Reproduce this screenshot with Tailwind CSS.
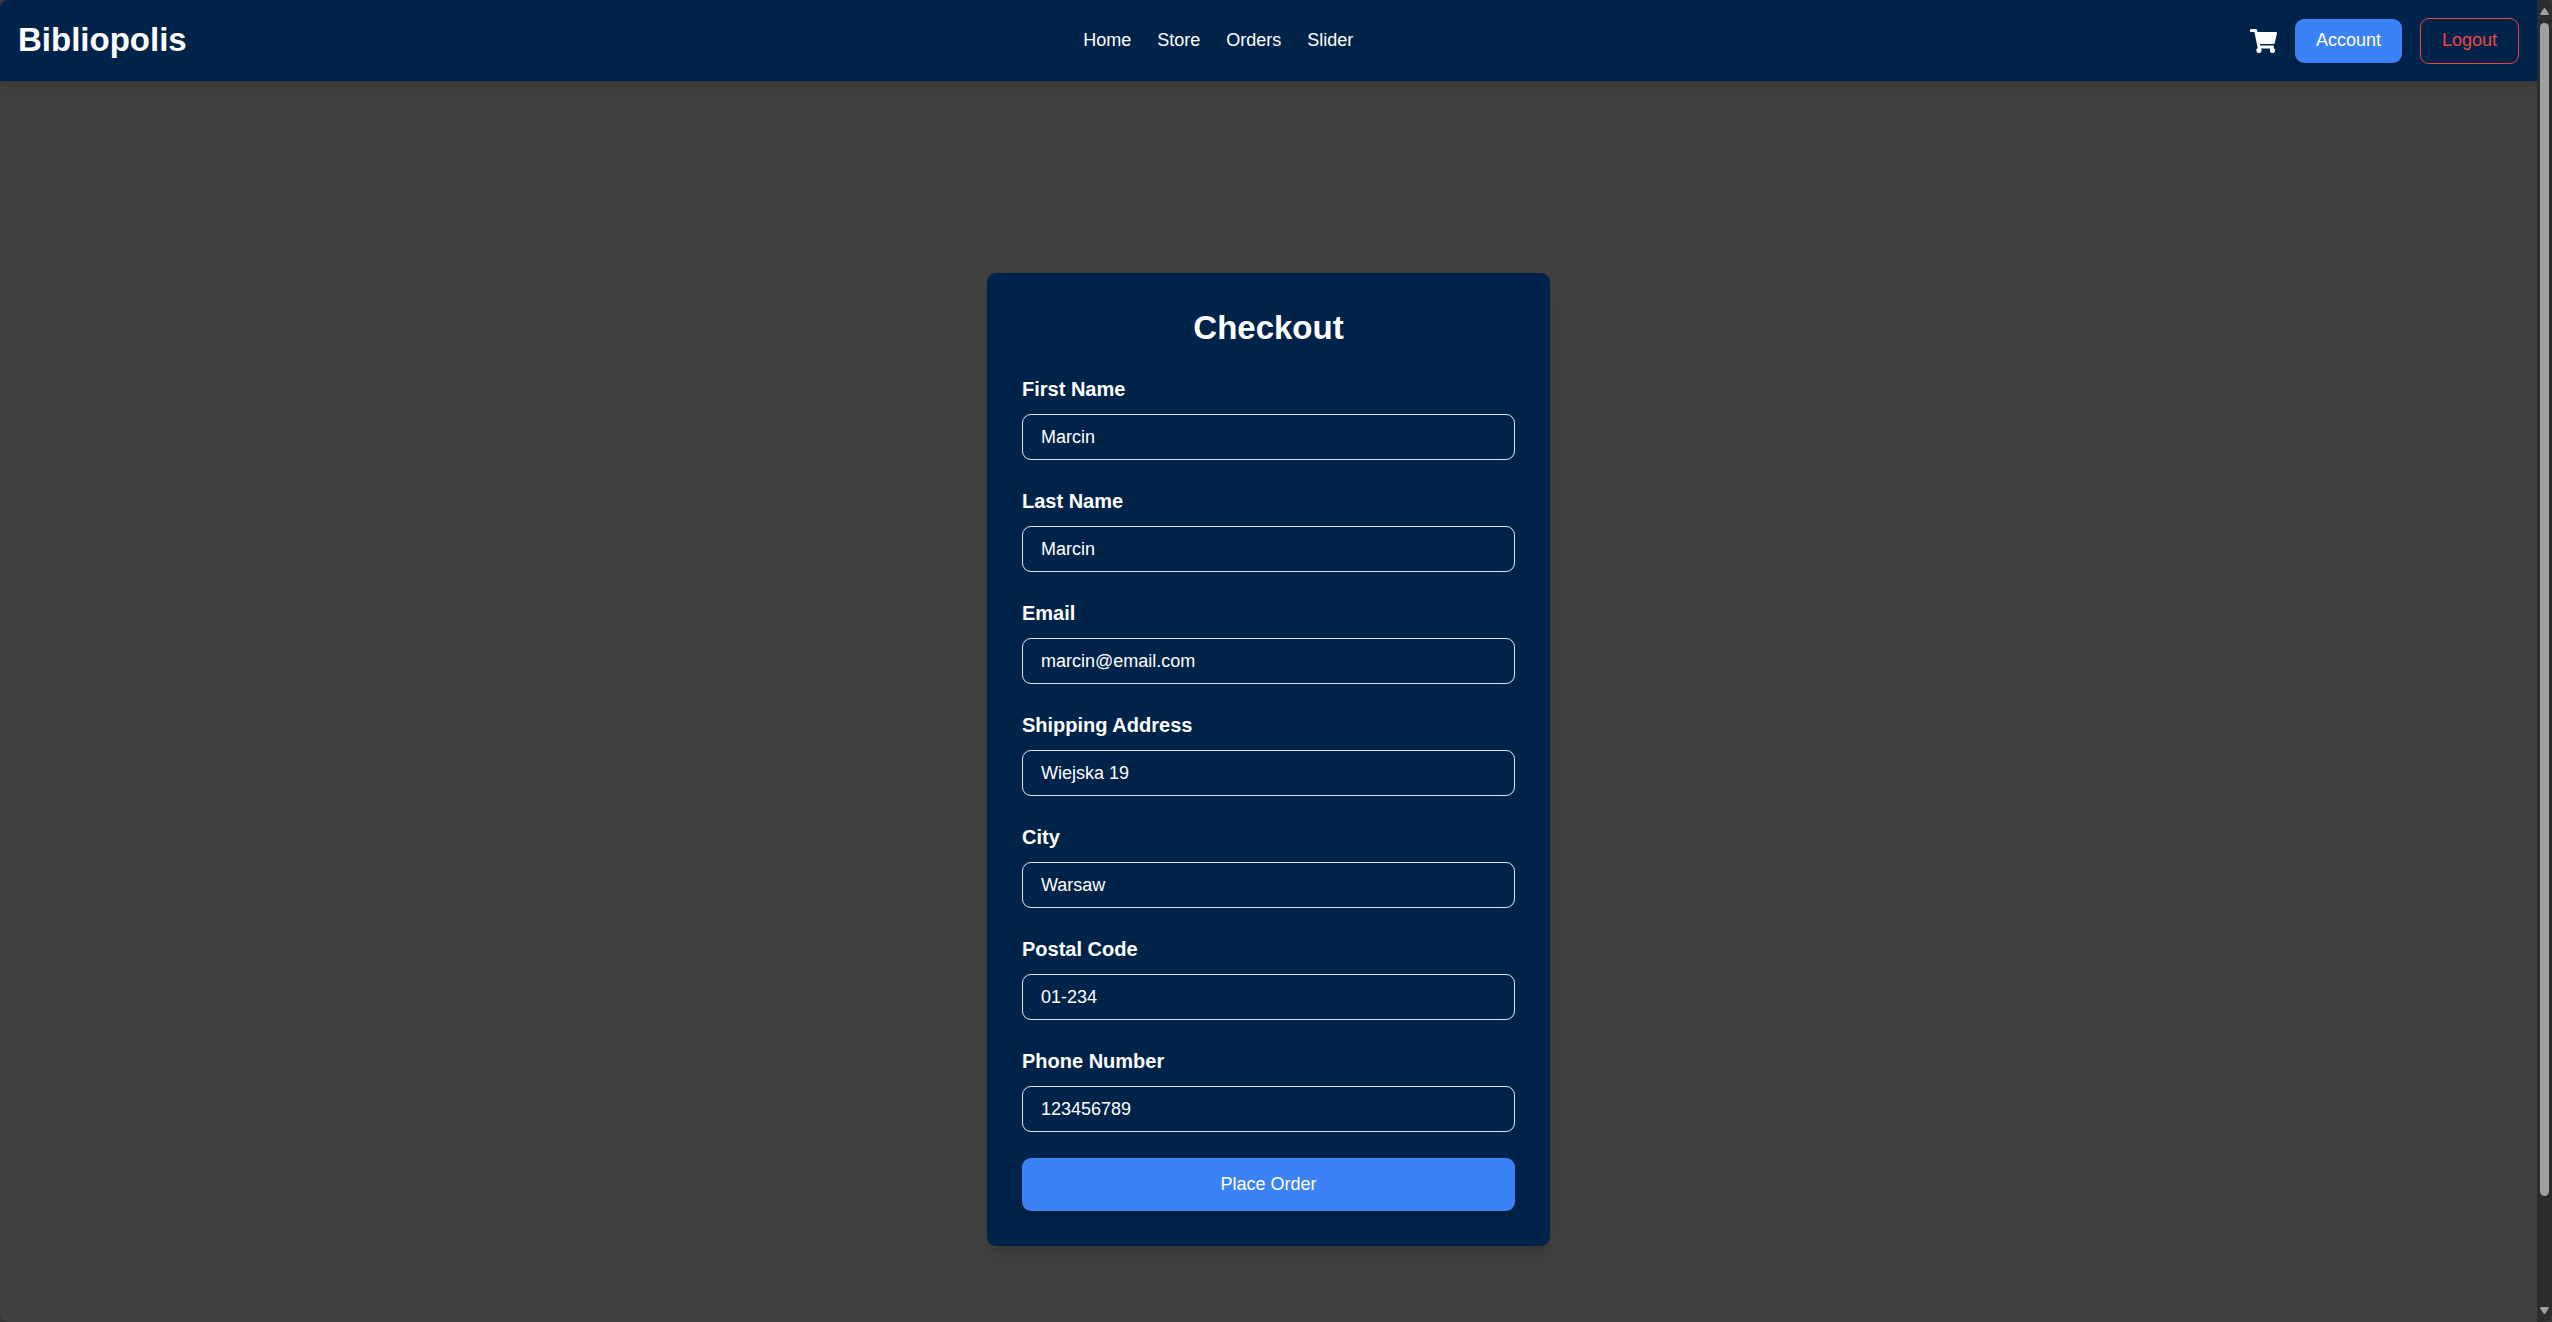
<!DOCTYPE html>
<html lang="en">
<head>
<meta charset="utf-8">
<meta name="viewport" content="width=device-width, initial-scale=1">
<title>Checkout - Bibliopolis</title>
<script src="https://cdn.jsdelivr.net/npm/@tailwindcss/browser@4"></script>
</head>
<body class="bg-[#373737] font-['Liberation_Sans',Arial,sans-serif] text-[18px] leading-[26px] text-white">
<div class="flex min-h-screen overflow-hidden rounded-lg bg-[#404040]">
  <div class="flex min-w-0 flex-1 flex-col">
    <header class="flex h-[81px] items-center justify-between bg-[#002349] px-[18px] shadow-lg">
      <a href="#" class="pb-[2px] text-[33px] leading-10 font-bold">Bibliopolis</a>
      <nav class="flex gap-[26px] pb-[2px]">
        <a href="#">Home</a>
        <a href="#">Store</a>
        <a href="#">Orders</a>
        <a href="#">Slider</a>
      </nav>
      <div class="flex items-center gap-[18px]">
        <a href="#" aria-label="Cart">
          <svg class="h-6 w-[27px]" viewBox="0 0 576 512" fill="currentColor"><path d="M528.12 301.319l47.273-208C578.806 78.301 567.391 64 551.99 64H159.208l-9.166-44.81C147.758 8.021 137.93 0 126.529 0H24C10.745 0 0 10.745 0 24v16c0 13.255 10.745 24 24 24h69.883l70.248 343.435C147.325 417.1 136 435.222 136 456c0 30.928 25.072 56 56 56s56-25.072 56-56c0-15.674-6.447-29.835-16.824-40h209.647C430.447 426.165 424 440.326 424 456c0 30.928 25.072 56 56 56s56-25.072 56-56c0-22.172-12.888-41.332-31.579-50.405l5.517-24.276c3.413-15.018-8.002-29.319-23.403-29.319H218.117l-6.545-32h293.145c11.206 0 20.92-7.754 23.403-18.681z"/></svg>
        </a>
        <button class="h-11 rounded-[9px] bg-[#3b82f6] px-[21px] pb-[2px] shadow-md">Account</button>
        <button class="h-[46px] rounded-[9px] border border-[#ef4444] px-[21px] pb-[2px] text-[#ef4444]">Logout</button>
      </div>
    </header>

    <main class="flex flex-1 items-start justify-center pt-48 pb-[76px]">
      <form class="flex w-full max-w-[563px] flex-col gap-[26px] rounded-[9px] bg-[#002349] p-[35px] shadow-lg">
        <h1 class="text-center text-[33px] leading-10 font-bold">Checkout</h1>
        <div class="flex flex-col gap-[9px]">
          <label for="first" class="text-[20px] leading-[31px] font-bold">First Name</label>
          <input id="first" type="text" value="Marcin" class="h-[46px] w-full rounded-[9px] border border-[#e5e7eb] bg-transparent px-[18px]">
        </div>
        <div class="flex flex-col gap-[9px]">
          <label for="last" class="text-[20px] leading-[31px] font-bold">Last Name</label>
          <input id="last" type="text" value="Marcin" class="h-[46px] w-full rounded-[9px] border border-[#e5e7eb] bg-transparent px-[18px]">
        </div>
        <div class="flex flex-col gap-[9px]">
          <label for="email" class="text-[20px] leading-[31px] font-bold">Email</label>
          <input id="email" type="email" value="marcin@email.com" class="h-[46px] w-full rounded-[9px] border border-[#e5e7eb] bg-transparent px-[18px]">
        </div>
        <div class="flex flex-col gap-[9px]">
          <label for="address" class="text-[20px] leading-[31px] font-bold">Shipping Address</label>
          <input id="address" type="text" value="Wiejska 19" class="h-[46px] w-full rounded-[9px] border border-[#e5e7eb] bg-transparent px-[18px]">
        </div>
        <div class="flex flex-col gap-[9px]">
          <label for="city" class="text-[20px] leading-[31px] font-bold">City</label>
          <input id="city" type="text" value="Warsaw" class="h-[46px] w-full rounded-[9px] border border-[#e5e7eb] bg-transparent px-[18px]">
        </div>
        <div class="flex flex-col gap-[9px]">
          <label for="postal" class="text-[20px] leading-[31px] font-bold">Postal Code</label>
          <input id="postal" type="text" value="01-234" class="h-[46px] w-full rounded-[9px] border border-[#e5e7eb] bg-transparent px-[18px]">
        </div>
        <div class="flex flex-col gap-[9px]">
          <label for="phone" class="text-[20px] leading-[31px] font-bold">Phone Number</label>
          <input id="phone" type="tel" value="123456789" class="h-[46px] w-full rounded-[9px] border border-[#e5e7eb] bg-transparent px-[18px]">
        </div>
        <button type="button" class="h-[53px] rounded-[9px] bg-[#3b82f6] pb-[2px] shadow-md">Place Order</button>
      </form>
    </main>
  </div>

  <!-- Scroll rail -->
  <div class="flex w-[15px] shrink-0 flex-col items-center bg-[#2c2c2c] py-2 text-[#9f9f9f]" aria-hidden="true">
    <svg class="h-[7px] w-[9px]" viewBox="0 0 9 7" fill="currentColor"><path d="M4.5 0Q5 0 5.4.6L8.7 5.6Q9 7 8 7H1Q0 7 .3 5.6L3.6.6Q4 0 4.5 0Z"/></svg>
    <div class="mt-2 mb-[111px] w-[9px] flex-1 rounded-full bg-[#9f9f9f]"></div>
    <svg class="h-[7px] w-[9px]" viewBox="0 0 9 7" fill="currentColor"><path d="M4.5 7Q5 7 5.4 6.4L8.7 1.4Q9 0 8 0H1Q0 0 .3 1.4L3.6 6.4Q4 7 4.5 7Z"/></svg>
  </div>
</div>
</body>
</html>
